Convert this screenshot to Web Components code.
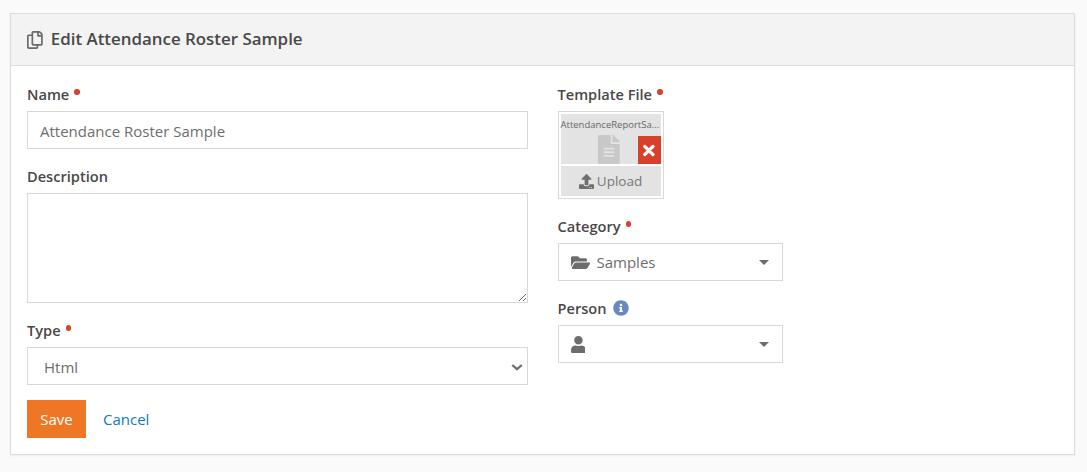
<!DOCTYPE html>
<html><head><meta charset="utf-8">
<style>
html,body{margin:0;padding:0;background:#fafafa;}
body{font-family:"Open Sans","Noto Sans",sans-serif;font-size:15px;color:#484848;}
</style></head>
<body>
<rock-page>
  <rock-panel heading="Edit Attendance Roster Sample">
    <rock-col>
      <rock-field label="Name" required><rock-text value="Attendance Roster Sample"></rock-text></rock-field>
      <rock-field label="Description"><rock-area></rock-area></rock-field>
      <rock-field label="Type" required><rock-select value="Html"></rock-select></rock-field>
      <rock-actions></rock-actions>
    </rock-col>
    <rock-col>
      <rock-field label="Template File" required><rock-file name="AttendanceReportSa..."></rock-file></rock-field>
      <rock-field label="Category" required><rock-picker icon="folder" value="Samples"></rock-picker></rock-field>
      <rock-field label="Person" info><rock-picker icon="user"></rock-picker></rock-field>
    </rock-col>
  </rock-panel>
</rock-page>
<script>
const P={
copy:[448,"M433.941 65.941l-51.882-51.882A48 48 0 0 0 348.118 0H176c-26.51 0-48 21.49-48 48v48H48c-26.51 0-48 21.49-48 48v320c0 26.51 21.49 48 48 48h224c26.51 0 48-21.49 48-48v-48h80c26.51 0 48-21.49 48-48V99.882a48 48 0 0 0-14.059-33.941zM266 464H54a6 6 0 0 1-6-6V150a6 6 0 0 1 6-6h74v224c0 26.51 21.49 48 48 48h96v42a6 6 0 0 1-6 6zm128-96H182a6 6 0 0 1-6-6V54a6 6 0 0 1 6-6h106v88c0 13.255 10.745 24 24 24h88v202a6 6 0 0 1-6 6zm6-256h-64V48h9.632c1.591 0 3.117.632 4.243 1.757l48.368 48.368a6 6 0 0 1 1.757 4.243V112z"],
file:[384,"M224 136V0H24C10.7 0 0 10.7 0 24v464c0 13.3 10.7 24 24 24h336c13.3 0 24-10.7 24-24V160H248c-13.2 0-24-10.8-24-24zm64 236c0 6.6-5.4 12-12 12H108c-6.6 0-12-5.4-12-12v-8c0-6.6 5.4-12 12-12h168c6.6 0 12 5.4 12 12v8zm0-64c0 6.6-5.4 12-12 12H108c-6.6 0-12-5.4-12-12v-8c0-6.6 5.4-12 12-12h168c6.6 0 12 5.4 12 12v8zm0-72v8c0 6.6-5.4 12-12 12H108c-6.6 0-12-5.4-12-12v-8c0-6.6 5.4-12 12-12h168c6.6 0 12 5.4 12 12zm96-114.1v6.1H256V0h6.1c6.4 0 12.5 2.5 17 7l97.9 98c4.5 4.5 7 10.6 7 16.9z"],
upload:[512,"M296 384h-80c-13.3 0-24-10.7-24-24V192h-87.7c-17.8 0-26.7-21.5-14.1-34.1L242.3 5.7c7.5-7.5 19.8-7.5 27.3 0l152.2 152.2c12.6 12.6 3.7 34.1-14.1 34.1H320v168c0 13.3-10.7 24-24 24zm216-8v112c0 13.3-10.7 24-24 24H24c-13.3 0-24-10.7-24-24V376c0-13.3 10.7-24 24-24h136v8c0 30.9 25.1 56 56 56h80c30.9 0 56-25.1 56-56v-8h136c13.3 0 24 10.7 24 24zm-124 88c0-11-9-20-20-20s-20 9-20 20 9 20 20 20 20-9 20-20zm64 0c0-11-9-20-20-20s-20 9-20 20 9 20 20 20 20-9 20-20z"],
times:[352,"M242.72 256l100.07-100.07c12.28-12.28 12.28-32.19 0-44.48l-22.24-22.24c-12.28-12.28-32.19-12.28-44.48 0L176 189.28 75.93 89.21c-12.28-12.28-32.19-12.28-44.48 0L9.21 111.45c-12.28 12.28-12.28 32.19 0 44.48L109.28 256 9.21 356.07c-12.28 12.28-12.28 32.19 0 44.48l22.24 22.24c12.28 12.28 32.2 12.28 44.48 0L176 322.72l100.07 100.07c12.28 12.28 32.2 12.28 44.48 0l22.24-22.24c12.28-12.28 12.28-32.19 0-44.48L242.72 256z"],
folder:[576,"M572.694 292.093L500.27 416.248A63.997 63.997 0 0 1 444.989 448H45.025c-18.523 0-30.064-20.093-20.731-36.093l72.424-124.155A64 64 0 0 1 152 256h399.964c18.523 0 30.064 20.093 20.73 36.093zM152 224h328v-48c0-26.51-21.49-48-48-48H272l-64-64H48C21.49 64 0 85.49 0 112v278.046l69.077-118.418C86.214 242.25 117.989 224 152 224z"],
user:[448,"M224 256c70.7 0 128-57.3 128-128S294.7 0 224 0 96 57.3 96 128s57.3 128 128 128zm89.6 32h-16.7c-22.2 10.2-46.9 16-72.9 16s-50.6-5.8-72.9-16h-16.7C60.2 288 0 348.2 0 422.4V464c0 26.5 21.5 48 48 48h352c26.5 0 48-21.5 48-48v-41.6c0-74.2-60.2-134.4-134.4-134.4z"],
info:[512,"M256 8C119.043 8 8 119.083 8 256c0 136.997 111.043 248 248 248s248-111.003 248-248C504 119.083 392.957 8 256 8zm0 110c23.196 0 42 18.804 42 42s-18.804 42-42 42-42-18.804-42-42 18.804-42 42-42zm56 254c0 6.627-5.373 12-12 12h-88c-6.627 0-12-5.373-12-12v-24c0-6.627 5.373-12 12-12h12v-64h-12c-6.627 0-12-5.373-12-12v-24c0-6.627 5.373-12 12-12h64c6.627 0 12 5.373 12 12v100h12c6.627 0 12 5.373 12 12v24z"]
};
const icon=(n,h,c)=>{const [w,d]=P[n];return `<svg width="${h*w/512}" height="${h}" viewBox="0 0 ${w} 512" fill="${c}" style="display:block;flex:none"><path d="${d}"/></svg>`};
const def=(name,fn)=>customElements.define(name,class extends HTMLElement{constructor(){super();this.attachShadow({mode:'open'})}connectedCallback(){this.shadowRoot.innerHTML=fn(this)}});
const FF='"Open Sans","Noto Sans",sans-serif';
def('rock-page',()=>`<style>:host{display:block;padding:13px 12px 17px 10px}</style><slot></slot>`);
def('rock-panel',e=>`<style>
:host{display:block;background:#fff;border:1px solid #dcdcdc;box-shadow:0 1px 2px rgba(0,0,0,.05)}
header{display:flex;align-items:center;gap:8px;height:51px;padding:0 16px;background:#f3f3f3;border-bottom:1px solid #dcdcdc;font:600 16.9px/1 ${FF};color:#484848}
main{display:grid;grid-template-columns:1fr 1fr;column-gap:30px;padding:16px}
</style><header>${icon('copy',18,'#6a6a6a')}<span>${e.getAttribute('heading')}</span></header><main><slot></slot></main>`);
def('rock-col',()=>`<style>:host{display:flex;flex-direction:column;gap:15px}</style><slot></slot>`);
def('rock-field',e=>`<style>
:host{display:block}
.l{display:flex;align-items:center;height:24px;margin-bottom:5px;font:600 14.6px/24px ${FF};color:#484848}
.r{width:5.5px;height:5.5px;border-radius:50%;background:#d4442e;margin:-4px 0 0 5px}
.i{margin:0 0 0 7px}
</style><div class="l"><span>${e.getAttribute('label')}</span>${e.hasAttribute('required')?'<i class="r"></i>':''}${e.hasAttribute('info')?`<span class="i">${icon('info',16,'#6789bf')}</span>`:''}</div><slot></slot>`);
const box=`display:flex;align-items:center;box-sizing:border-box;height:38px;background:#fff;border:1px solid #d8d8d8;font:400 15px/20px ${FF};color:#6d6d6d`;
def('rock-text',e=>`<style>:host{display:block}div{${box};padding:1px 12px 0}</style><div>${e.getAttribute('value')}</div>`);
def('rock-area',()=>`<style>:host{display:block}textarea{display:block;box-sizing:border-box;width:100%;height:110px;margin:0;border:1px solid #d8d8d8;border-radius:0;outline:0;background:#fff;padding:6px 12px}</style><textarea aria-label="Description"></textarea>`);
def('rock-select',e=>`<style>:host{display:block}div{${box};justify-content:space-between;padding:1px 2px 0 16px}svg{display:block}</style><div><span>${e.getAttribute('value')}</span><svg width="16" height="16" viewBox="0 0 16 16"><path d="M3.2 6 8 10.2 12.8 6" fill="none" stroke="#6d6d6d" stroke-width="2.2"/></svg></div>`);
def('rock-picker',e=>`<style>:host{display:block;width:225px}
div{${box};padding:0 13px 0 12px}
.ic{display:flex;width:26px;flex:none}
span{flex:1}
b{width:0;height:0;border:5px solid transparent;border-top:5px solid #6d6d6d;border-bottom:0;flex:none}
</style><div><span class="ic">${icon(e.getAttribute('icon'),17,'#6d6d6d')}</span><span>${e.getAttribute('value')||''}</span><b></b></div>`);
def('rock-file',e=>`<style>
:host{display:block;box-sizing:border-box;width:106px;height:88px;border:1px solid #d8d8d8;padding:2px;background:#fff;font-family:${FF}}
.t{position:relative;height:50px;background:#e3e3e3;margin-bottom:2px;display:flex;justify-content:center;box-sizing:border-box}
.n{position:absolute;left:0;right:0;top:4px;font-size:9.5px;line-height:13px;color:#666;white-space:nowrap;text-align:left}
.f{margin:21px 3px 0 0}
.x{position:absolute;right:0;top:22px;width:23px;height:28px;background:#d6412b;display:flex;align-items:center;justify-content:center}
.u{height:30px;background:#e3e3e3;display:flex;align-items:center;justify-content:center;gap:3px;font-size:13.5px;color:#777}
</style><div class="t"><span class="n">${e.getAttribute('name')}</span><span class="f">${icon('file',29,'#c8c8c8')}</span><span class="x">${icon('times',17,'#fff')}</span></div><div class="u">${icon('upload',15,'#6d6d6d')}<span>Upload</span></div>`);
def('rock-actions',()=>`<style>:host{display:flex;align-items:center;gap:17px;font:400 15px/20px ${FF}}
a{display:flex;align-items:center;justify-content:center;text-decoration:none}
.s{box-sizing:border-box;width:59px;height:38px;background:#ee7625;color:#fff}
.c{color:#0f79c4}
</style><a class="s">Save</a><a class="c">Cancel</a>`);
</script>
</body></html>
